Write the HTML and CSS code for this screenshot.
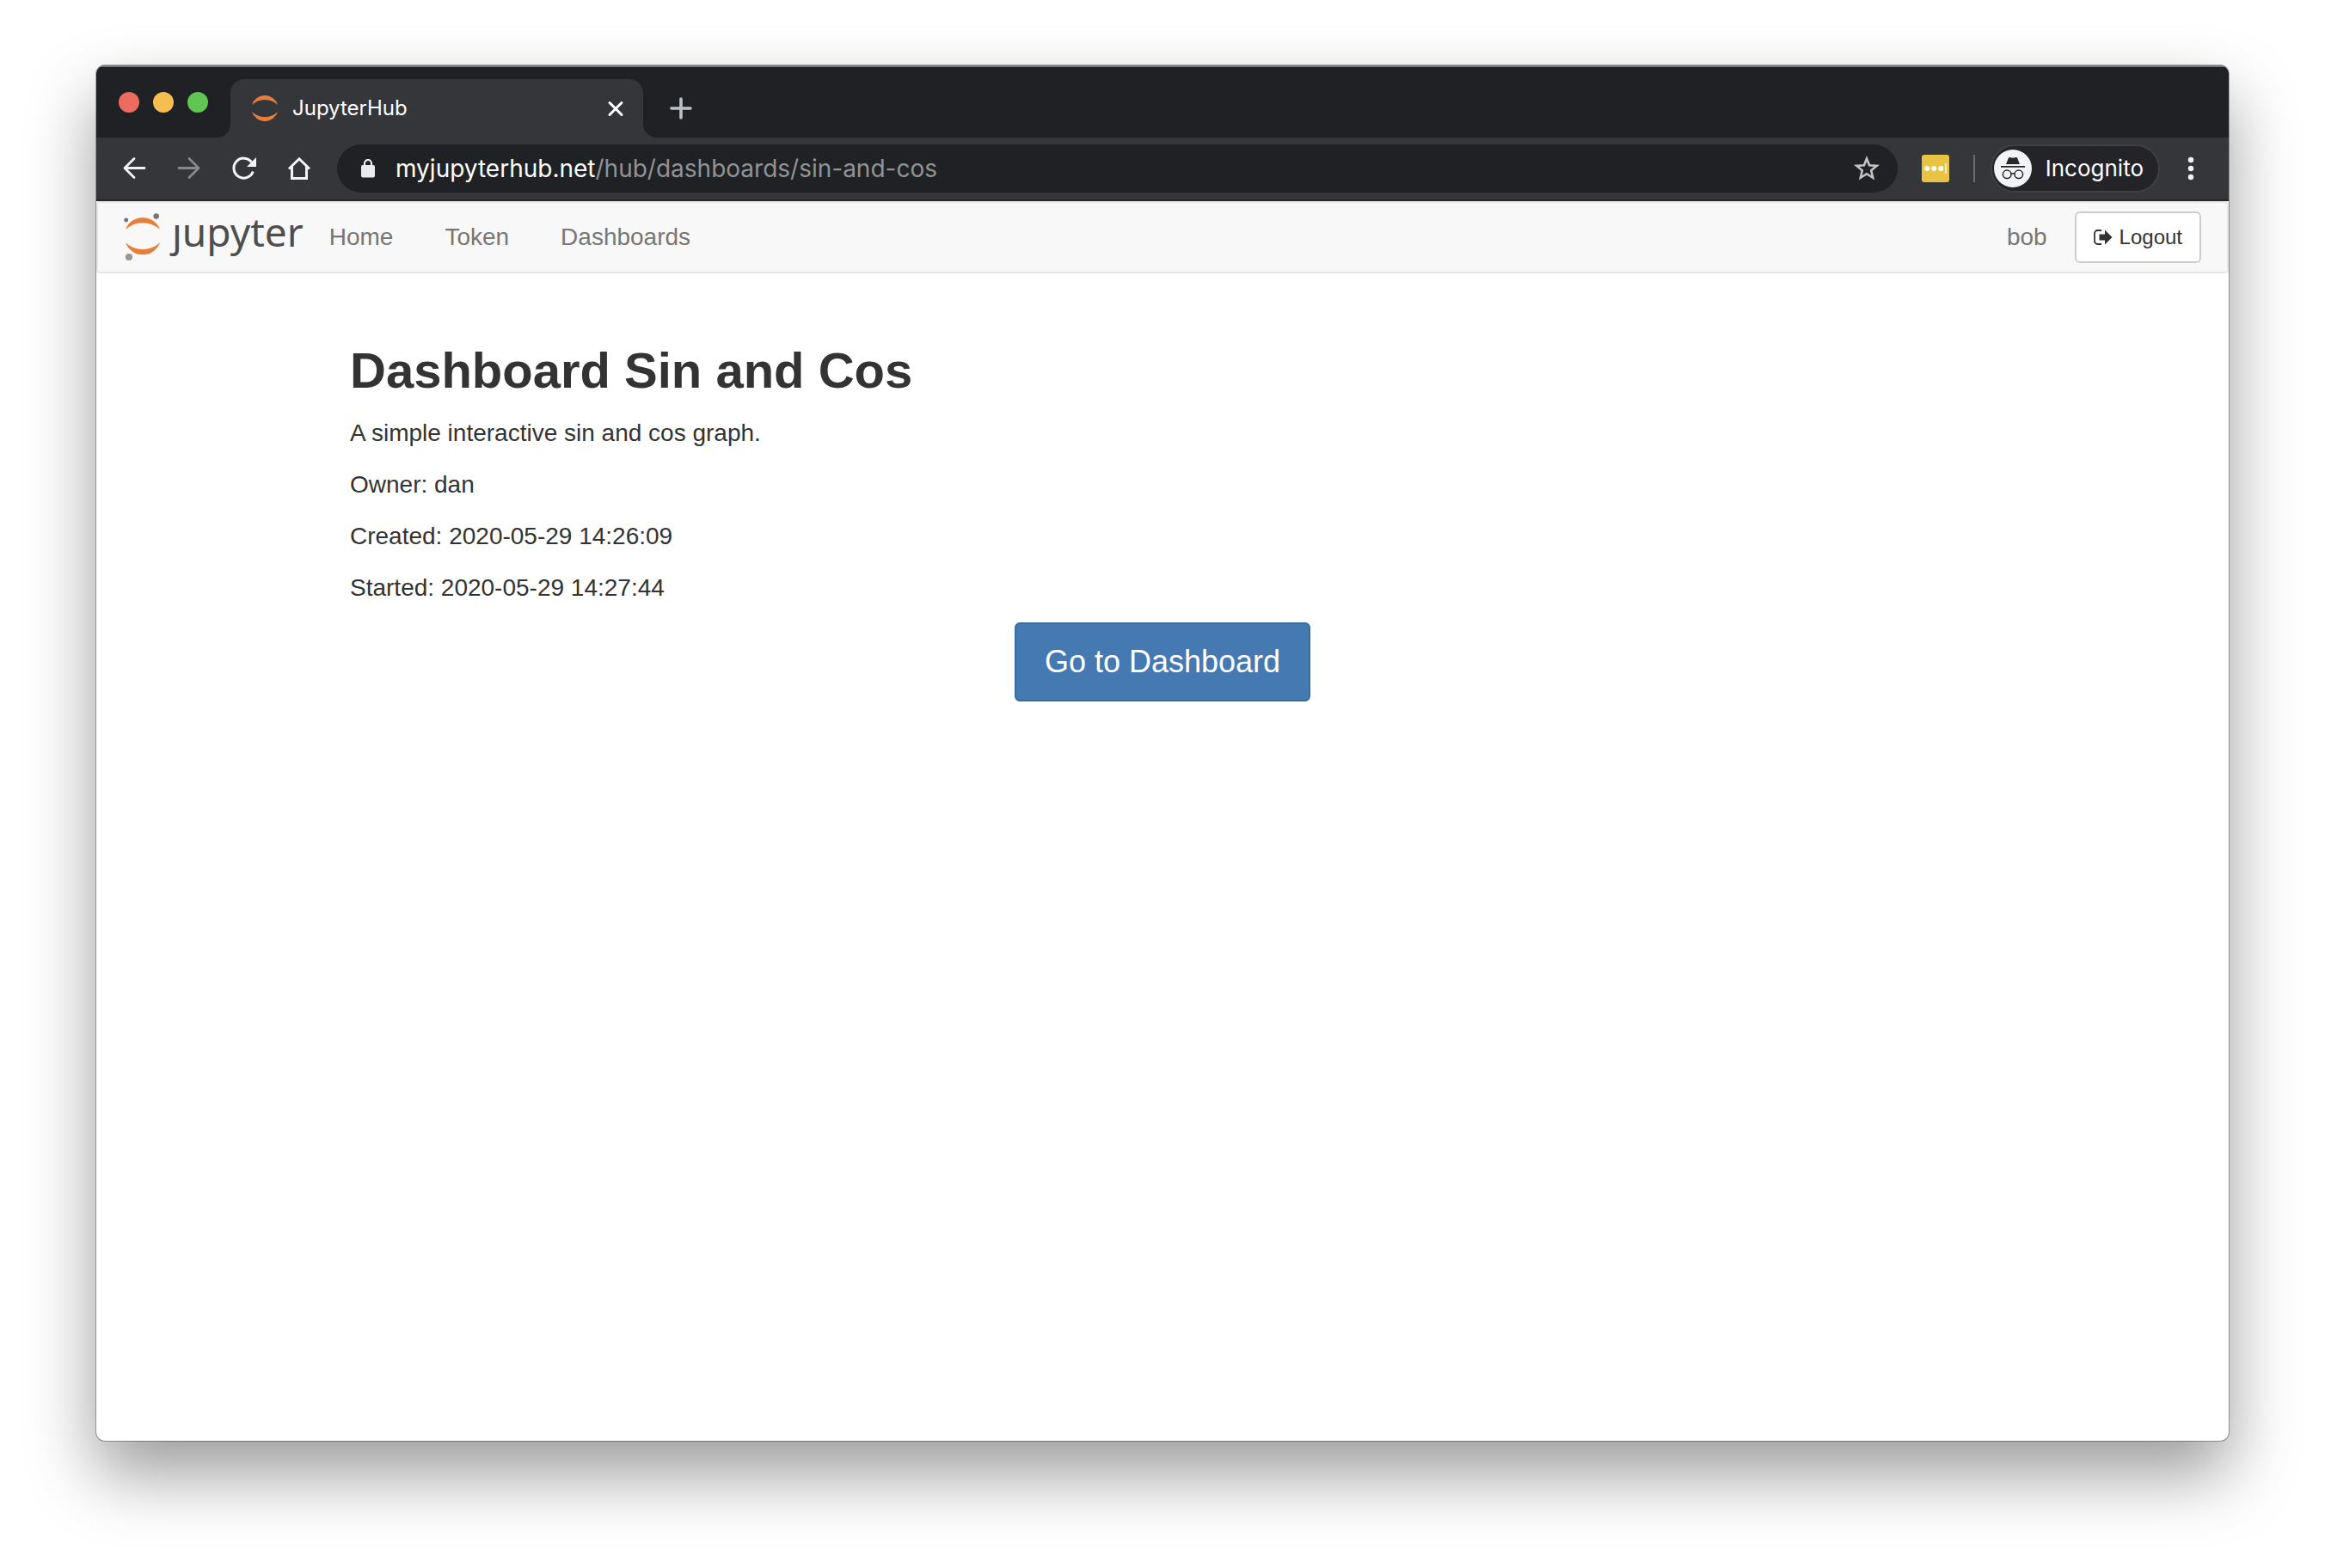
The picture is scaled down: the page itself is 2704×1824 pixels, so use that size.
FILE: index.html
```html
<!DOCTYPE html>
<html lang="en">
<head>
<meta charset="utf-8">
<title>JupyterHub</title>
<link rel="stylesheet" href="styles.css">
</head>
<body>
<div class="window">
  <header class="chrome">
    <div class="tab-strip">
      <div class="lights">
        <button class="light light-red" aria-label="Close window"></button>
        <button class="light light-yellow" aria-label="Minimize window"></button>
        <button class="light light-green" aria-label="Zoom window"></button>
      </div>
      <div class="tab">
        <svg class="favicon" viewBox="0 0 30 30" aria-hidden="true">
          <path fill="#e57f3e" d="M0 11A15.7 15.7 0 0 1 30 11A21.8 21.8 0 0 0 0 11ZM0 19A15.7 15.7 0 0 0 30 19A21.8 21.8 0 0 1 0 19Z"/>
        </svg>
        <span class="tab-title">JupyterHub</span>
        <button class="icon-button" aria-label="Close tab">
          <svg viewBox="0 0 32 32"><path d="M9 9.500L23 23.500M23 9.500L9 23.500" stroke="#fff" stroke-width="3" stroke-linecap="round"/></svg>
        </button>
      </div>
      <button class="icon-button new-tab" aria-label="New tab">
        <svg viewBox="0 0 32 32"><path d="M16 5V27M5 16H27" stroke="#bdc1c6" stroke-width="3.600" stroke-linecap="round"/></svg>
      </button>
    </div>
    <div class="toolbar">
      <div class="nav-buttons">
        <button class="icon-button" aria-label="Back">
          <svg viewBox="0 0 32 32"><path d="M28 15.500H5.500M16 4.500L5 15.500L16 26.500" fill="none" stroke="#f1f3f4" stroke-width="2.800" stroke-linecap="round" stroke-linejoin="round"/></svg>
        </button>
        <button class="icon-button" aria-label="Forward">
          <svg viewBox="0 0 32 32"><path d="M4 15.500H26.500M16 4.500L27 15.500L16 26.500" fill="none" stroke="#87888b" stroke-width="2.800" stroke-linecap="round" stroke-linejoin="round"/></svg>
        </button>
        <button class="icon-button" aria-label="Reload">
          <svg viewBox="0 0 32 32"><path d="M26.300 19.500A11.500 11.500 0 1 1 24.500 8.500" fill="none" stroke="#f1f3f4" stroke-width="3"/><path d="M30 3V14H19Z" fill="#f1f3f4"/></svg>
        </button>
        <button class="icon-button" aria-label="Home">
          <svg viewBox="0 0 32 32"><path d="M4 16.500L16 4.800L28 16.500M7.500 14V27.500H24.500V14" fill="none" stroke="#f1f3f4" stroke-width="3"/></svg>
        </button>
      </div>
      <div class="omnibox">
        <svg class="lock" viewBox="0 0 16 22" aria-hidden="true"><rect y="7" width="16" height="14.500" rx="2" fill="#e8eaed"/><path d="M4 8V5A4 4 0 0 1 12 5V8" fill="none" stroke="#e8eaed" stroke-width="2.200"/></svg>
        <label class="url-host" for="url">myjupyterhub.net</label>
        <input class="url-path" id="url" type="text" value="/hub/dashboards/sin-and-cos">
        <button class="icon-button" aria-label="Bookmark this page">
          <svg viewBox="0 0 32 32"><path d="M16 4.500L19.100 12.200L27.700 12.900L21.200 18.300L23.200 26.800L16 22.200L8.800 26.800L10.800 18.300L4.300 12.900L12.900 12.200Z" fill="none" stroke="#c3c3c3" stroke-width="2.600"/></svg>
        </button>
      </div>
      <button class="icon-button extension" aria-label="Extension">
        <svg viewBox="0 0 32 32"><rect width="32" height="32" rx="3" fill="#e8c344"/><g fill="#fff"><circle cx="6.300" cy="16" r="3"/><circle cx="14.300" cy="16" r="3"/><circle cx="22.300" cy="16" r="3"/><path opacity=".7" d="M27 10h2v12h-2z"/></g></svg>
      </button>
      <span class="divider"></span>
      <button class="incognito">
        <svg class="incognito-icon" viewBox="-22 -22 44 44" aria-hidden="true"><circle r="22" fill="#f1f3f4"/><path fill="#27272b" d="M-8 -5L-5.200 -12Q-4.700 -13.300 -3.400 -12.900Q0 -11.600 3.400 -12.900Q4.700 -13.300 5.200 -12L8 -5ZM-14 -3H14V-1.300H-14Z"/><g fill="none" stroke="#27272b" stroke-width="1.500"><circle cx="-6.800" cy="6.800" r="4.800"/><circle cx="6.800" cy="6.800" r="4.800"/><path d="M-2 6.300Q0 5 2 6.300"/></g></svg>
        <span>Incognito</span>
      </button>
      <button class="icon-button menu" aria-label="Menu">
        <svg viewBox="0 0 32 32"><g fill="#f1f3f4"><circle cx="16" cy="6" r="3.200"/><circle cx="16" cy="16" r="3.200"/><circle cx="16" cy="26" r="3.200"/></g></svg>
      </button>
    </div>
  </header>

  <nav class="navbar">
    <a class="brand" href="#" aria-label="jupyter">
      <svg class="brand-mark" viewBox="0 0 44 56" aria-hidden="true"><path fill="#e57f3e" d="M2 19A21.300 21.300 0 0 1 42 19A29.800 29.800 0 0 0 2 19ZM2 34.300A21.300 21.300 0 0 0 42 34.300A29.800 29.800 0 0 1 2 34.300Z"/><circle cx="2.700" cy="8" r="2.400" fill="#6f7070"/><circle cx="37.700" cy="3.600" r="3.300" fill="#767677"/><circle cx="6" cy="51" r="4.100" fill="#989798"/></svg>
      <span class="brand-name">ȷupyter</span>
    </a>
    <ul class="links">
      <li><a href="#">Home</a></li>
      <li><a href="#">Token</a></li>
      <li><a href="#">Dashboards</a></li>
    </ul>
    <span class="user">bob</span>
    <button class="logout">
      <svg class="logout-icon" viewBox="0 0 22 18" aria-hidden="true"><path d="M9 1H4.500A3.500 3.500 0 0 0 1 4.500V13.500A3.500 3.500 0 0 0 4.500 17H9" fill="none" stroke="#333" stroke-width="1.800"/><path d="M6.500 5.500H13V.500L21.500 9L13 17.500V12.500H6.500Z" fill="#333"/></svg>
      <span>Logout</span>
    </button>
  </nav>

  <main class="container">
    <h1>Dashboard Sin and Cos</h1>
    <p>A simple interactive sin and cos graph.</p>
    <p>Owner: dan</p>
    <p>Created: 2020-05-29 14:26:09</p>
    <p>Started: 2020-05-29 14:27:44</p>
    <a class="go" href="#">Go to Dashboard</a>
  </main>
</div>
</body>
</html>
```
FILE: styles.css
```css
* {
  box-sizing: border-box;
}

body {
  display: flex;
  flex-direction: column;
  min-height: 100vh;
  margin: 0;
  padding: 76px 112px 148px;
  background: #fff;
  color: #333;
  font: 28px/40px "Liberation Sans", Arial, sans-serif;
}

button {
  padding: 0;
  border: 0;
  background: none;
  color: inherit;
  font: inherit;
}

a {
  color: inherit;
  text-decoration: none;
}

svg {
  display: block;
  flex: none;
}

.window {
  flex: 1;
  border-radius: 10px;
  overflow: hidden;
  background: #fff;
  box-shadow: 0 0 0 1px rgba(0, 0, 0, .3), 0 38px 80px rgba(0, 0, 0, .4);
}

/* Browser frame */

.chrome {
  border-top: 2px solid #77797b;
  border-bottom: 2px solid #28262a;
  background: #35363a;
  color: #fff;
  font-family: Inter, Roboto, sans-serif;
}

.tab-strip {
  display: flex;
  align-items: flex-end;
  height: 82px;
  padding-left: 26px;
  background: #202124;
}

.lights {
  display: flex;
  gap: 16px;
  padding-bottom: 29px;
}

.light {
  width: 24px;
  height: 24px;
  border-radius: 50%;
}

.light-red { background: #ed6a5e; }
.light-yellow { background: #f5bf4f; }
.light-green { background: #61c554; }

.tab {
  position: relative;
  display: flex;
  align-items: center;
  width: 480px;
  height: 68px;
  margin-left: 26px;
  padding: 0 16px 0 25px;
  border-radius: 16px 16px 0 0;
  background: #35363a;
}

.tab::before,
.tab::after {
  position: absolute;
  bottom: 0;
  width: 16px;
  height: 16px;
  content: "";
}

.tab::before {
  right: 100%;
  background: radial-gradient(circle at 0 0, #202124 16px, #35363a 16px);
}

.tab::after {
  left: 100%;
  background: radial-gradient(circle at 100% 0, #202124 16px, #35363a 16px);
}

.favicon {
  width: 30px;
  height: 30px;
}

.tab-title {
  flex: 1;
  padding-left: 17px;
  font-size: 24px;
}

.icon-button,
.icon-button svg {
  flex: none;
  width: 32px;
  height: 32px;
}

.new-tab {
  margin: 0 0 18px 28px;
}

.toolbar {
  display: flex;
  align-items: center;
  height: 72px;
  padding: 0 28px;
}

.nav-buttons {
  display: flex;
  gap: 32px;
}

.omnibox {
  display: flex;
  flex: 1;
  align-items: center;
  height: 56px;
  margin: 0 28px;
  padding: 0 20px 0 28px;
  border-radius: 28px;
  background: #202124;
  font-size: 28px;
}

.lock {
  width: 16px;
  height: 22px;
  margin-right: 24px;
}

.url-path {
  flex: 1;
  min-width: 0;
  padding: 0;
  border: 0;
  outline: 0;
  background: none;
  color: #929395;
  font: inherit;
}

.divider {
  width: 2px;
  height: 32px;
  margin: 0 18px 0 28px;
  background: #6a6b6f;
}

.incognito {
  display: flex;
  align-items: center;
  gap: 16px;
  height: 56px;
  padding: 0 17px 0 2px;
  border: 2px solid #3f4044;
  border-radius: 28px;
  background: #242328;
  font-size: 26px;
}

.incognito-icon {
  width: 44px;
  height: 44px;
}

.menu {
  margin-left: 20px;
}

/* Hub navigation */

.navbar {
  display: flex;
  align-items: center;
  height: 84px;
  padding: 0 30px;
  border: 2px solid #e7e7e7;
  border-radius: 4px;
  background: #f8f8f8;
  color: #777;
}

.brand {
  display: flex;
  align-items: center;
  gap: 12px;
}

.brand-mark {
  width: 44px;
  height: 56px;
}

.brand-name {
  padding-bottom: 14px;
  color: #4e4e4e;
  font-family: "Noto Sans", "Open Sans", sans-serif;
  font-size: 46px;
}

.links {
  display: flex;
  flex: 1;
  gap: 60px;
  margin: 0;
  padding: 0 30px;
  list-style: none;
}

.logout {
  display: flex;
  align-items: center;
  gap: 8px;
  height: 60px;
  margin-left: 32px;
  padding: 0 20px;
  border: 2px solid #ccc;
  border-radius: 6px;
  background: #fff;
  color: #333;
  font-size: 24px;
}

.logout-icon {
  width: 22px;
  height: 18px;
}

/* Dashboard page */

.container {
  display: flex;
  flex-direction: column;
  max-width: 1950px;
  margin: 0 auto;
  padding: 80px 30px 40px;
}

h1 {
  margin: 0 0 20px;
  font-size: 58px;
  line-height: 66px;
}

p {
  margin: 0 0 20px;
}

.go {
  align-self: center;
  padding: 20px 33px;
  border: 2px solid #3a6ea1;
  border-radius: 6px;
  background: #4479b2;
  color: #fff;
  font-size: 36px;
  line-height: 48px;
}
```
